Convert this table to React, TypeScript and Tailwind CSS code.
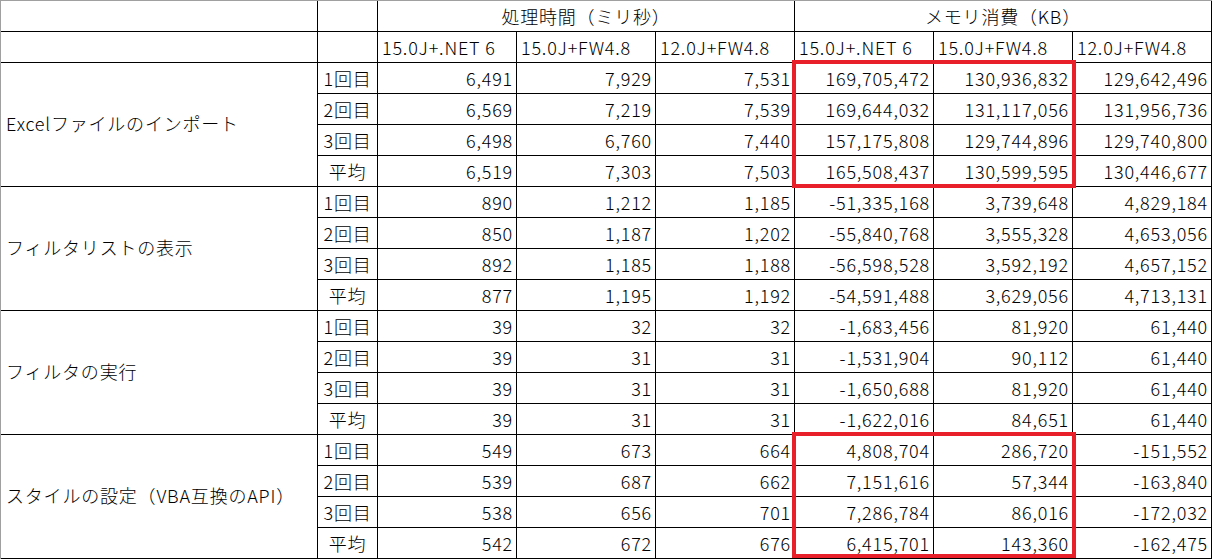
import React from "react";

type Group = { name: string; rows: string[][] };

const rounds = ["1回目", "2回目", "3回目", "平均"];

const groups: Group[] = [
  {
    name: "Excelファイルのインポート",
    rows: [
      ["6,491", "7,929", "7,531", "169,705,472", "130,936,832", "129,642,496"],
      ["6,569", "7,219", "7,539", "169,644,032", "131,117,056", "131,956,736"],
      ["6,498", "6,760", "7,440", "157,175,808", "129,744,896", "129,740,800"],
      ["6,519", "7,303", "7,503", "165,508,437", "130,599,595", "130,446,677"],
    ],
  },
  {
    name: "フィルタリストの表示",
    rows: [
      ["890", "1,212", "1,185", "-51,335,168", "3,739,648", "4,829,184"],
      ["850", "1,187", "1,202", "-55,840,768", "3,555,328", "4,653,056"],
      ["892", "1,185", "1,188", "-56,598,528", "3,592,192", "4,657,152"],
      ["877", "1,195", "1,192", "-54,591,488", "3,629,056", "4,713,131"],
    ],
  },
  {
    name: "フィルタの実行",
    rows: [
      ["39", "32", "32", "-1,683,456", "81,920", "61,440"],
      ["39", "31", "31", "-1,531,904", "90,112", "61,440"],
      ["39", "31", "31", "-1,650,688", "81,920", "61,440"],
      ["39", "31", "31", "-1,622,016", "84,651", "61,440"],
    ],
  },
  {
    name: "スタイルの設定（VBA互換のAPI）",
    rows: [
      ["549", "673", "664", "4,808,704", "286,720", "-151,552"],
      ["539", "687", "662", "7,151,616", "57,344", "-163,840"],
      ["538", "656", "701", "7,286,784", "86,016", "-172,032"],
      ["542", "672", "676", "6,415,701", "143,360", "-162,475"],
    ],
  },
];

const versions = ["15.0J+.NET 6", "15.0J+FW4.8", "12.0J+FW4.8"];

const cell = "h-[31px] border-r border-b border-black flex items-center";

export default function App() {
  return (
    <div
      className="relative w-[1212px] h-[559px] bg-white text-[18px] leading-none font-light tracking-[0.8px] text-black"
      style={{ fontFamily: '"Noto Sans CJK JP", "Noto Sans", sans-serif' }}
    >
      <div className="grid grid-cols-[317px_60px_repeat(6,139px)] border-l border-t border-[#a0a0a0]">
        {/* header rows */}
        <div className={cell} />
        <div className={cell} />
        <div className={`${cell} col-span-3 justify-center`}>処理時間（ミリ秒）</div>
        <div className={`${cell} col-span-3 justify-center`}>メモリ消費（KB）</div>

        <div className={cell} />
        <div className={cell} />
        {[...versions, ...versions].map((v, i) => (
          <div key={i} className={`${cell} pl-[4px]`}>
            {v}
          </div>
        ))}

        {groups.map((g) => (
          <React.Fragment key={g.name}>
            <div className="row-span-4 border-r border-b border-black flex items-center pl-[5px] pb-[3px]">
              {g.name}
            </div>
            {g.rows.map((r, ri) => (
              <React.Fragment key={ri}>
                <div className={`${cell} col-start-2 justify-center`}>{rounds[ri]}</div>
                {r.map((v, vi) => (
                  <div key={vi} className={`${cell} justify-end pr-[3px]`}>
                    {v}
                  </div>
                ))}
              </React.Fragment>
            ))}
          </React.Fragment>
        ))}
      </div>

      {/* red highlight boxes */}
      <div className="absolute left-[792px] top-[60px] w-[284px] h-[128px] border-4 border-[#e8202a]" />
      <div className="absolute left-[792px] top-[432px] w-[284px] h-[126px] border-4 border-[#e8202a]" />
    </div>
  );
}
